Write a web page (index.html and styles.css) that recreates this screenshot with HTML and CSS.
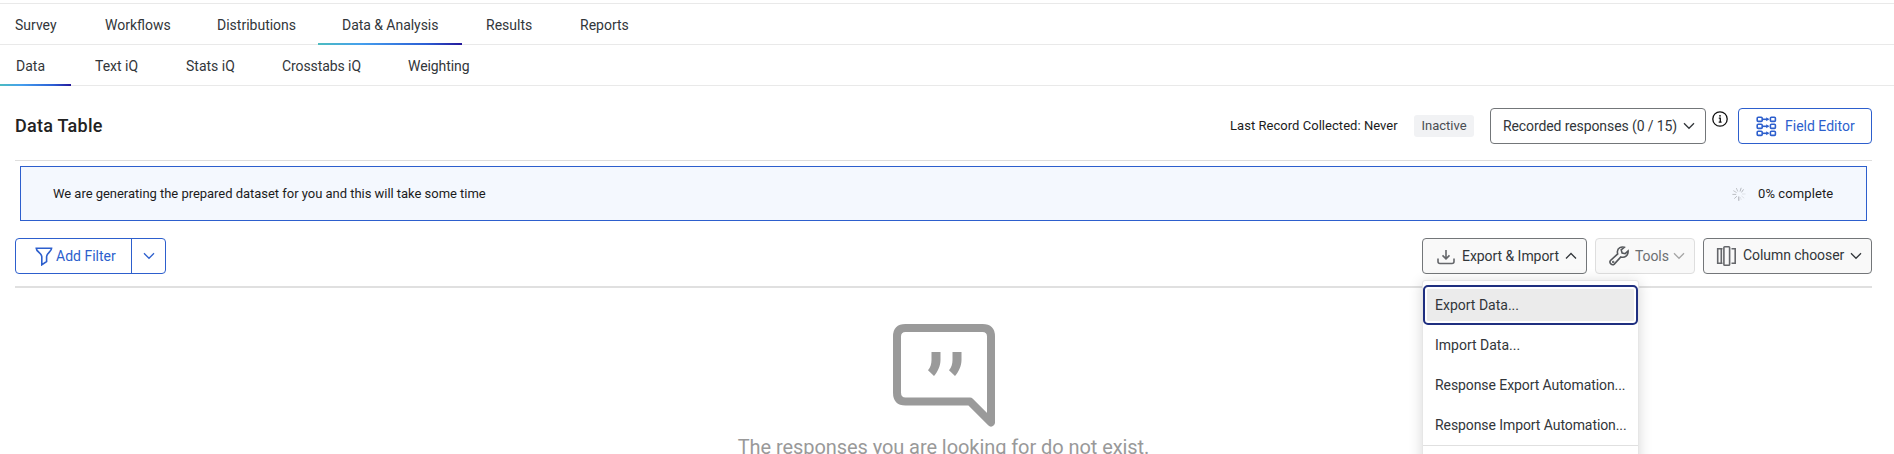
FILE: index.html
```html
<!DOCTYPE html>
<html lang="en">
<head>
<meta charset="utf-8">
<title>Data &amp; Analysis</title>
<link rel="stylesheet" href="styles.css">
</head>
<body>
<nav class="tabs tabs-main">
  <a class="tab t-survey"><span>Survey</span></a>
  <a class="tab t-workflows"><span>Workflows</span></a>
  <a class="tab t-distributions"><span>Distributions</span></a>
  <a class="tab t-analysis active"><span>Data &amp; Analysis</span></a>
  <a class="tab t-results"><span>Results</span></a>
  <a class="tab t-reports"><span>Reports</span></a>
</nav>
<nav class="tabs tabs-sub">
  <a class="tab s-data active"><span>Data</span></a>
  <a class="tab s-text"><span>Text iQ</span></a>
  <a class="tab s-stats"><span>Stats iQ</span></a>
  <a class="tab s-cross"><span>Crosstabs iQ</span></a>
  <a class="tab s-weight"><span>Weighting</span></a>
</nav>
<main class="content">
  <header class="head">
    <h1 class="title">Data Table</h1>
    <span class="last">Last Record Collected: Never</span>
    <span class="badge">Inactive</span>
    <button class="btn select"><span class="lbl">Recorded responses (0 / 15)</span>
      <svg class="chev" width="12" height="8" viewBox="0 0 12 8"><path d="M1 1.300l5 5 5-5"/></svg></button>
    <svg class="info" width="16" height="16" viewBox="0 0 16 16"><circle cx="8" cy="8" r="7.200"/><path d="M6.800 7.100h1.500v3.800M6.700 11.200h2.900"/><circle class="dot" cx="8" cy="4.800" r=".9"/></svg>
    <button class="btn blue editor">
      <svg class="ico" width="21" height="21" viewBox="0 0 21 21"><g id="r"><rect x="1.200" y="1.200" width="5" height="4.200" rx="1"/><rect x="14.400" y="1.200" width="5" height="4.200" rx="1"/><path d="M7 3.300h5.500"/><path class="tip" d="M10.200 1.300l2.900 2-2.900 2z"/></g><use href="#r" y="7"/><use href="#r" y="14"/></svg>
      <span class="lbl">Field Editor</span></button>
  </header>
  <section class="banner">
    <span class="msg">We are generating the prepared dataset for you and this will take some time</span>
    <svg class="spin" width="14" height="14" viewBox="0 0 14 14"><path stroke="#b5b8be" d="M8 4.500L9.200.8M9.500 5.400l2-3"/><path stroke="#dfe2e8" d="M10 7h3.500M9.500 9l2.700 2.200"/><path stroke="#e3e6ec" d="M8.300 10l1 3"/><path stroke="#a9acb2" d="M6.800 9.500v4.300"/><path stroke="#babdc2" d="M4.900 9.200l-2.600 2.400M4.200 7.400H.4"/><path stroke="#c3c6cb" d="M4.600 5.600L1.300 3.600M5.800 4.500L4.300 1"/></svg>
    <span class="pct">0% complete</span>
  </section>
  <div class="toolbar">
    <div class="split">
      <button class="filter"><svg class="ico" width="18" height="19" viewBox="0 0 18 19"><path d="M1.200 1.200h15.400c0 3.500-5 5-5 8.600v4.700l-4.800 3.300V9.800c0-3.600-5.600-5.100-5.600-8.600z"/></svg><span class="lbl">Add Filter</span></button>
      <button class="more"><svg class="chev" width="12" height="8" viewBox="0 0 12 8"><path d="M1 1.300l5 5 5-5"/></svg></button>
    </div>
    <div class="anchor">
      <button class="btn grey export">
        <svg class="ico" width="18" height="17" viewBox="0 0 18 17"><path d="M9 2v8.700M5.500 7.400L9 10.900l3.500-3.500M1 10.500v3q0 2 2 2h12q2 0 2-2v-3"/></svg>
        <span class="lbl">Export &amp; Import</span>
        <svg class="chev" width="12" height="8" viewBox="0 0 12 8"><path d="M1 6.500l5-5 5 5"/></svg></button>
      <div class="menu">
        <div class="item focus">Export Data...</div>
        <div class="item">Import Data...</div>
        <div class="item long">Response Export Automation...</div>
        <div class="item long">Response Import Automation...</div>
        <div class="rule"></div>
      </div>
    </div>
    <button class="btn grey tools">
      <svg class="ico" width="20" height="20" viewBox="0 0 20 20"><path d="M15.300 1.300c-3-1.100-6.600.7-6.900 4.200-.1.900.1 1.700.3 2.400L1.500 14.500c-1.800 2.500 1.500 5.400 3.800 3.600l6.500-7.200c3.900 1.300 7.700-1.600 7.300-5.900l-2.900 2.700-3.100-.7-.9-3.100z"/><circle cx="4.200" cy="15.900" r=".4"/></svg>
      <span class="lbl">Tools</span>
      <svg class="chev" width="12" height="8" viewBox="0 0 12 8"><path d="M1 1.300l5 5 5-5"/></svg></button>
    <button class="btn grey columns">
      <svg class="ico" width="20" height="20" viewBox="0 0 20 20"><path d="M6.500 2.700H.9M6.500 17.300H.9M1.700 2.700v14.600M5.300 2.700v14.600M15.500 2.700h3.700v14.600h-3.700"/><rect x="7.900" y=".8" width="5.700" height="18.400" rx=".8"/></svg>
      <span class="lbl">Column chooser</span>
      <svg class="chev" width="12" height="8" viewBox="0 0 12 8"><path d="M1 1.300l5 5 5-5"/></svg></button>
  </div>
  <section class="empty">
    <svg class="bubble" width="102" height="103" viewBox="0 0 102 103"><path class="line" d="M98 98.500V12.500q0-8.500-8.500-8.500h-77Q4 4 4 12.500v56Q4 77.500 12.500 77.500H77z"/><path class="mark" d="M38.500 28h9v8c0 6-3 12-6.500 16l-6-5.800c2.500-3 3.500-6.200 3.500-10.200zM59.500 28h9v8c0 6-3 12-6.500 16l-6-5.800c2.500-3 3.500-6.200 3.500-10.200z"/></svg>
    <p class="none">The responses you are looking for do not exist.</p>
  </section>
</main>
</body>
</html>
```
FILE: styles.css
```css
* { box-sizing: border-box; }
html { overflow: hidden; }
body { margin: 0; padding-top: 3px; height: 454px; overflow: hidden; background: #fff; color: #32363a; font: 14px/20px Roboto, "Liberation Sans", sans-serif; }
button { font: inherit; color: inherit; background: #fff; padding: 0; margin: 0; }
svg { flex: none; fill: none; display: block; }
.tabs { display: flex; height: 41px; border-top: 1px solid #e9e9e9; }
.tabs-sub { height: 42px; border-bottom: 1px solid #e9e9e9; }
.tab { display: flex; align-items: center; height: 41px; padding: 0 24px; flex: none; white-space: nowrap; position: relative; }
.tabs-main .tab { padding-top: 1px; }
.active::after { content: ""; position: absolute; left: 0; right: 0; bottom: 0; height: 2px; background: linear-gradient(90deg, #4cbcc0, #459fee 30%, #2c5fd5 75%, #24189a); }
.t-survey { width: 81px; padding-left: 15px; }
.t-workflows { width: 112px; }
.t-distributions { width: 125px; }
.t-analysis { width: 144px; letter-spacing: -.04px; }
.t-results { width: 94px; }
.s-data { width: 71px; padding-left: 16px; }
.s-text { width: 91px; }
.s-stats { width: 96px; }
.s-cross { width: 126px; letter-spacing: -.08px; }
.s-weight { letter-spacing: -.08px; }
.content { padding: 0 22px 0 15px; }
.head { display: flex; align-items: center; height: 75px; padding-top: 6px; border-bottom: 1px solid #dedede; }
.title { margin: 0 auto 0 0; font-size: 18px; font-weight: 500; letter-spacing: .26px; color: #222; }
.last { width: 168px; margin-right: 16px; font-size: 13px; letter-spacing: .04px; color: #1c1c1c; white-space: nowrap; }
.badge { width: 60px; height: 22px; margin-right: 16px; border-radius: 3px; background: #f1f2f4; color: #4a4d52; font-size: 13px; line-height: 21px; text-align: center; }
.btn { display: flex; align-items: center; height: 36px; border: 1px solid #737679; border-radius: 4px; white-space: nowrap; flex: none; }
.lbl { white-space: nowrap; flex: none; }
.chev { stroke: currentColor; stroke-width: 1.3; }
.ico { stroke: currentColor; stroke-width: 1.6; }
.select { width: 216px; padding-left: 12px; }
.select .lbl { width: 180px; text-align: left; letter-spacing: -.1px; }
.info { stroke: #111; stroke-width: 1.3; margin: -14px 10px 0 6px; }
.info .dot { fill: #111; stroke: none; }
.blue { border-color: #2d5fcd; color: #2d5fcd; }
.tip { fill: currentColor; stroke: none; }
.editor { width: 134px; padding-left: 17px; gap: 8px; }
.banner { display: flex; align-items: center; height: 55px; margin: 5px 5px 17px; padding-left: 32px; border: 1px solid #2d5fcd; background: #f4f8fe; color: #1c1c1c; font-size: 13px; white-space: nowrap; }
.msg { flex: 1; letter-spacing: -.03px; }
.spin { margin-right: 12px; }
.pct { width: 108px; letter-spacing: .1px; }
.toolbar { display: flex; height: 50px; align-items: flex-start; border-bottom: 2px solid #e0e0e0; }
.split { display: flex; width: 151px; height: 36px; border: 1px solid #2d5fcd; color: #2d5fcd; border-radius: 4px; margin-right: auto; }
.split button { display: flex; align-items: center; border: 0; background: none; height: 34px; }
.filter { width: 115px; padding-left: 19px; gap: 3px; }
.more { flex: 1; justify-content: center; }
.split .more { border-left: 1px solid #2d5fcd; }
.grey { background: #f9f9f9; }
.anchor { position: relative; margin-right: 8px; }
.export { width: 165px; padding-left: 14px; }
.export .lbl { width: 103px; margin-left: 7px; text-align: left; letter-spacing: -.05px; }
.export .ico, .columns .ico { color: #65676b; }
.tools { width: 100px; margin-right: 8px; padding-left: 13px; border-color: #dedede; color: #6b6e72; }
.tools .lbl { width: 38px; margin-left: 6px; text-align: left; letter-spacing: -.1px; }
.tools .chev { color: #a5a5a5; }
.tools .ico { color: #55585c; }
.columns { width: 169px; padding-left: 12px; }
.columns .lbl { width: 107px; margin: -2px 0 0 7px; text-align: left; letter-spacing: -.06px; }
.menu { position: absolute; z-index: 2; left: 0; top: 42px; width: 217px; height: 200px; padding-top: 5px; background: #fff; border: 1px solid #e6e6e6; border-radius: 3px; box-shadow: 0 2px 14px rgba(0,0,0,.16); }
.item { height: 40px; padding: 10px 12px; white-space: nowrap; }
.long { letter-spacing: -.08px; }
.focus { margin-top: -1px; background: #ebebeb; border: 2px solid #1f2f80; border-radius: 5px; box-shadow: inset 0 0 0 2px #fff; padding: 8px 10px; }
.rule { border-top: 1px solid #e0e0e0; }
.empty { display: flex; flex-direction: column; align-items: center; height: 131px; padding-top: 35.500px; }
.bubble .line { stroke: #9a9a9a; stroke-width: 8; stroke-linejoin: round; }
.bubble .mark { fill: #9a9a9a; }
.none { margin: 8.500px 0 0; font-size: 20px; line-height: 24px; letter-spacing: -.07px; color: #999; white-space: nowrap; }
```
